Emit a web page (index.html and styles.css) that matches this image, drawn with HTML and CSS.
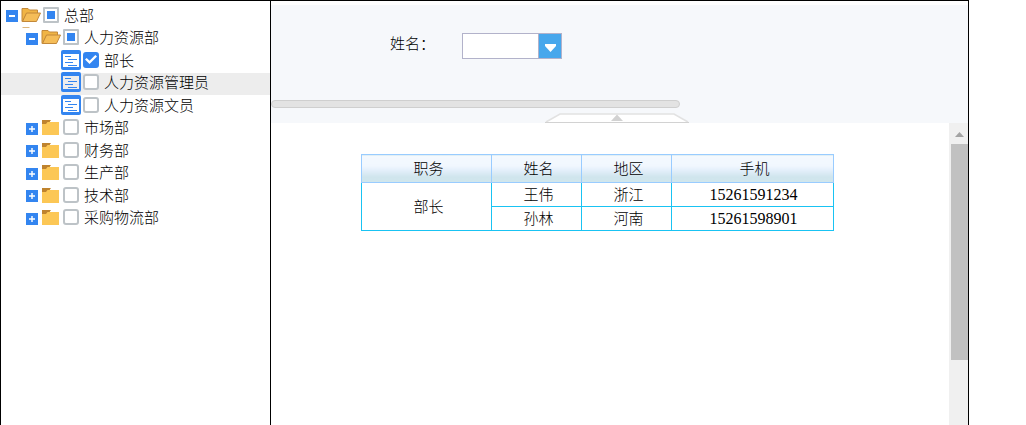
FILE: index.html
```
<!DOCTYPE html>
<html lang="zh-CN">
<head>
    <meta charset="UTF-8">
    <meta name="viewport" content="width=device-width, initial-scale=1.0">
    <title>人员查询</title>
    <link rel="stylesheet" href="styles.css">
</head>
<body>
    <!-- Shared icons -->
    <svg class="sprite" aria-hidden="true">
        <symbol id="minus" viewBox="0 0 12 12">
            <rect width="12" height="12" fill="#3385f0"/>
            <path d="M3 5h6v2H3z" fill="#fff"/>
        </symbol>
        <symbol id="plus" viewBox="0 0 12 12">
            <rect width="12" height="12" fill="#3385f0"/>
            <path d="M3 6h6M6 3v6" stroke="#fff" stroke-width="1.4"/>
        </symbol>
        <symbol id="open" viewBox="0 0 20 16">
            <path d="M1 14.500V1.500h6l1.500 1.500h8v4H5.500L1.500 14.500z" fill="#f0b445" stroke="#c2883a" stroke-linejoin="round"/>
            <path d="M5.500 6h14l-4 8.500H1.500z" fill="#f5bd58" stroke="#c2883a" stroke-linejoin="round"/>
        </symbol>
        <symbol id="closed" viewBox="0 0 20 16">
            <path d="M1 1h8v2h9v13H1z" fill="#fcc755"/>
            <path d="M1 1h9L8.500 3H6.500L5 5H1z" fill="#bf832e"/>
        </symbol>
        <symbol id="post" viewBox="0 0 20 20">
            <rect width="20" height="20" rx="2" fill="#3385f0"/>
            <path d="M2 4h16v13H2z" fill="currentColor"/>
            <path d="M4 6.500h6M7 9.500h9M4 12.500h8M7 15.500h9" stroke="#3385f0" stroke-width="1.2"/>
        </symbol>
    </svg>

    <div class="frame">
        <aside class="sidebar">
            <ul class="tree">
                <li class="node level-1">
                    <button class="toggle" aria-label="折叠"><svg><use href="#minus"/></svg></button>
                    <svg class="folder root">
                        <use href="#open"/>
                        <path d="M1.500 20.500h7" stroke="#dcb67c"/>
                    </svg>
                    <input type="checkbox" class="check partial" id="n1">
                    <label for="n1">总部</label>
                </li>
                <li class="node level-2">
                    <button class="toggle" aria-label="折叠"><svg><use href="#minus"/></svg></button>
                    <svg class="folder"><use href="#open"/></svg>
                    <input type="checkbox" class="check partial" id="n2">
                    <label for="n2">人力资源部</label>
                </li>
                <li class="node level-3">
                    <svg class="post"><use href="#post"/></svg>
                    <input type="checkbox" class="check" id="n3" checked>
                    <label for="n3">部长</label>
                </li>
                <li class="node level-3 active">
                    <svg class="post"><use href="#post"/></svg>
                    <input type="checkbox" class="check" id="n4">
                    <label for="n4">人力资源管理员</label>
                </li>
                <li class="node level-3">
                    <svg class="post"><use href="#post"/></svg>
                    <input type="checkbox" class="check" id="n5">
                    <label for="n5">人力资源文员</label>
                </li>
                <li class="node level-2">
                    <button class="toggle" aria-label="展开"><svg><use href="#plus"/></svg></button>
                    <svg class="folder"><use href="#closed"/></svg>
                    <input type="checkbox" class="check" id="n6">
                    <label for="n6">市场部</label>
                </li>
                <li class="node level-2">
                    <button class="toggle" aria-label="展开"><svg><use href="#plus"/></svg></button>
                    <svg class="folder"><use href="#closed"/></svg>
                    <input type="checkbox" class="check" id="n7">
                    <label for="n7">财务部</label>
                </li>
                <li class="node level-2">
                    <button class="toggle" aria-label="展开"><svg><use href="#plus"/></svg></button>
                    <svg class="folder"><use href="#closed"/></svg>
                    <input type="checkbox" class="check" id="n8">
                    <label for="n8">生产部</label>
                </li>
                <li class="node level-2">
                    <button class="toggle" aria-label="展开"><svg><use href="#plus"/></svg></button>
                    <svg class="folder"><use href="#closed"/></svg>
                    <input type="checkbox" class="check" id="n9">
                    <label for="n9">技术部</label>
                </li>
                <li class="node level-2">
                    <button class="toggle" aria-label="展开"><svg><use href="#plus"/></svg></button>
                    <svg class="folder"><use href="#closed"/></svg>
                    <input type="checkbox" class="check" id="n10">
                    <label for="n10">采购物流部</label>
                </li>
            </ul>
        </aside>

        <main class="main">
            <form class="query">
                <div class="field">
                    <label for="name">姓名：</label>
                    <select id="name" class="combo">
                        <option></option>
                        <option>王伟</option>
                        <option>孙林</option>
                    </select>
                </div>
                <div class="h-scroll"></div>
                <button type="button" class="collapse" aria-label="收起">
                    <svg viewBox="0 0 144 10">
                        <path d="M1 9L15 1h114l14 8" fill="#fff" stroke="#e2e2e2" stroke-width="1.5"/>
                        <path d="M0 9.500h144" stroke="#d2d2d2"/>
                        <path d="M66 8l6-6.500L78 8z" fill="#d2d2d2"/>
                    </svg>
                </button>
            </form>

            <div class="report">
                <div class="report-body">
                    <table class="staff">
                        <colgroup>
                            <col class="col-post">
                            <col class="col-short">
                            <col class="col-short">
                            <col class="col-phone">
                        </colgroup>
                        <thead>
                            <tr><th>职务</th><th>姓名</th><th>地区</th><th>手机</th></tr>
                        </thead>
                        <tbody>
                            <tr><td rowspan="2">部长</td><td>王伟</td><td>浙江</td><td class="phone">15261591234</td></tr>
                            <tr><td>孙林</td><td>河南</td><td class="phone">15261598901</td></tr>
                        </tbody>
                    </table>
                </div>
                <div class="v-scroll">
                    <svg class="v-arrow" viewBox="0 0 17 21"><path d="M4 14l4.500-5 4.500 5z" fill="#a3a3a3"/></svg>
                    <div class="v-thumb"></div>
                </div>
            </div>
        </main>
    </div>
</body>
</html>
```

FILE: styles.css
```
* {
    box-sizing: border-box;
}

body {
    margin: 0;
    background-color: #fff;
    color: #000;
    font-family: "Noto Sans CJK SC", sans-serif;
    font-size: 15px;
    font-weight: 300;
    line-height: 20px;
}

button {
    padding: 0;
    border: none;
    background: none;
    cursor: pointer;
}

svg {
    display: block;
    flex: none;
}

.sprite {
    display: none;
}

.frame {
    display: flex;
    min-height: 100vh;
    margin-right: 57px;
    border: 1px solid #000;
    border-bottom: none;
}

/* Tree */
.sidebar {
    flex: none;
    width: 270px;
    border-right: 1px solid #000;
}

.tree {
    display: grid;
    grid-auto-rows: 23px 22px;
    margin: 0;
    padding: 4px 0 0;
    list-style: none;
}

.node {
    display: flex;
    align-items: center;
    padding-bottom: 4px;
}

.level-1 {
    padding-left: 5px;
}

.level-2 {
    padding-left: 25px;
}

.level-3 {
    padding-left: 60px;
}

.active {
    background-color: #ededed;
}

.toggle {
    padding-top: 3px;
    margin-right: 3px;
}

.toggle svg {
    width: 12px;
    height: 12px;
}

.folder {
    width: 20px;
    height: 16px;
}

.root {
    overflow: visible;
}

.post {
    width: 20px;
    height: 20px;
    color: #fff;
}

.active .post {
    color: #ededed;
}

.check {
    appearance: none;
    flex: none;
    width: 16px;
    height: 16px;
    margin: 0 5px 0 2px;
    border: 2px solid #bdc3c7;
    border-radius: 3px;
    background-color: #fff;
}

.partial {
    border-radius: 1px;
    background: linear-gradient(#3385f0, #3385f0) center / 8px 8px no-repeat #fff;
}

.check:checked {
    display: grid;
    place-items: center;
    border-color: #3385f0;
    background-color: #3385f0;
}

.check:checked::before {
    content: "";
    width: 12px;
    height: 10px;
    background-color: #fff;
    clip-path: polygon(0 50%, 14% 35%, 38% 62%, 86% 5%, 100% 20%, 38% 95%);
}

/* Query panel */
.main {
    display: flex;
    flex-direction: column;
    flex: 1;
    min-width: 0;
}

.query {
    display: flex;
    flex-direction: column;
    height: 122px;
    border-top: 4px solid #fefefe;
    background-color: #f6f8fb;
}

.field {
    display: flex;
    align-items: flex-start;
    gap: 27px;
    padding: 28px 0 0 119px;
}

.combo {
    appearance: none;
    width: 100px;
    height: 26px;
    border: 1px solid #b2b2ca;
    border-radius: 0;
    background: url("data:image/svg+xml,%3Csvg xmlns='http://www.w3.org/2000/svg' width='23' height='24'%3E%3Cpath d='M0 0h23v24H0z' fill='%2347a7ec'/%3E%3Cpath d='M0 0h1v24H0z' fill='%23b2b2ca'/%3E%3Cpath d='M7 10h11v2l-5.500 6L7 12z' fill='%23fff'/%3E%3C/svg%3E") right center no-repeat #fff;
    font: inherit;
}

.h-scroll {
    width: 409px;
    max-width: 100%;
    height: 8px;
    margin-top: 41px;
    border: 1px solid #cfcfcf;
    border-radius: 4px;
    background-color: #e3e3e3;
}

.collapse {
    align-self: center;
    width: 144px;
    margin: auto 6px 0 0;
}

/* Report */
.report {
    display: flex;
    flex: 1;
}

.report-body {
    flex: 1;
    padding: 31px 0 0 90px;
}

.staff {
    width: 473px;
    border-collapse: collapse;
    table-layout: fixed;
    text-align: center;
}

.col-post {
    width: 130px;
}

.col-short {
    width: 90px;
}

.staff th,
.staff td {
    height: 24px;
    padding: 0 0 2px 4px;
    border: 1px solid #19c3f3;
    font-weight: 300;
}

.staff th {
    height: 28px;
    border-color: #99ccff;
    background: linear-gradient(#f4f9fe 0%, #f1f7fe 38%, #e3effa 55%, #cfe5ed 80%, #d1e6ec 100%);
}

.staff .phone {
    padding: 0 0 0 2px;
    font-family: "Liberation Serif", serif;
    font-size: 16px;
}

.v-scroll {
    width: 19px;
    padding-left: 2px;
    background-color: #f0f0f0;
}

.v-arrow {
    width: 17px;
    height: 21px;
}

.v-thumb {
    height: 216px;
    background-color: #c1c1c1;
}
```
